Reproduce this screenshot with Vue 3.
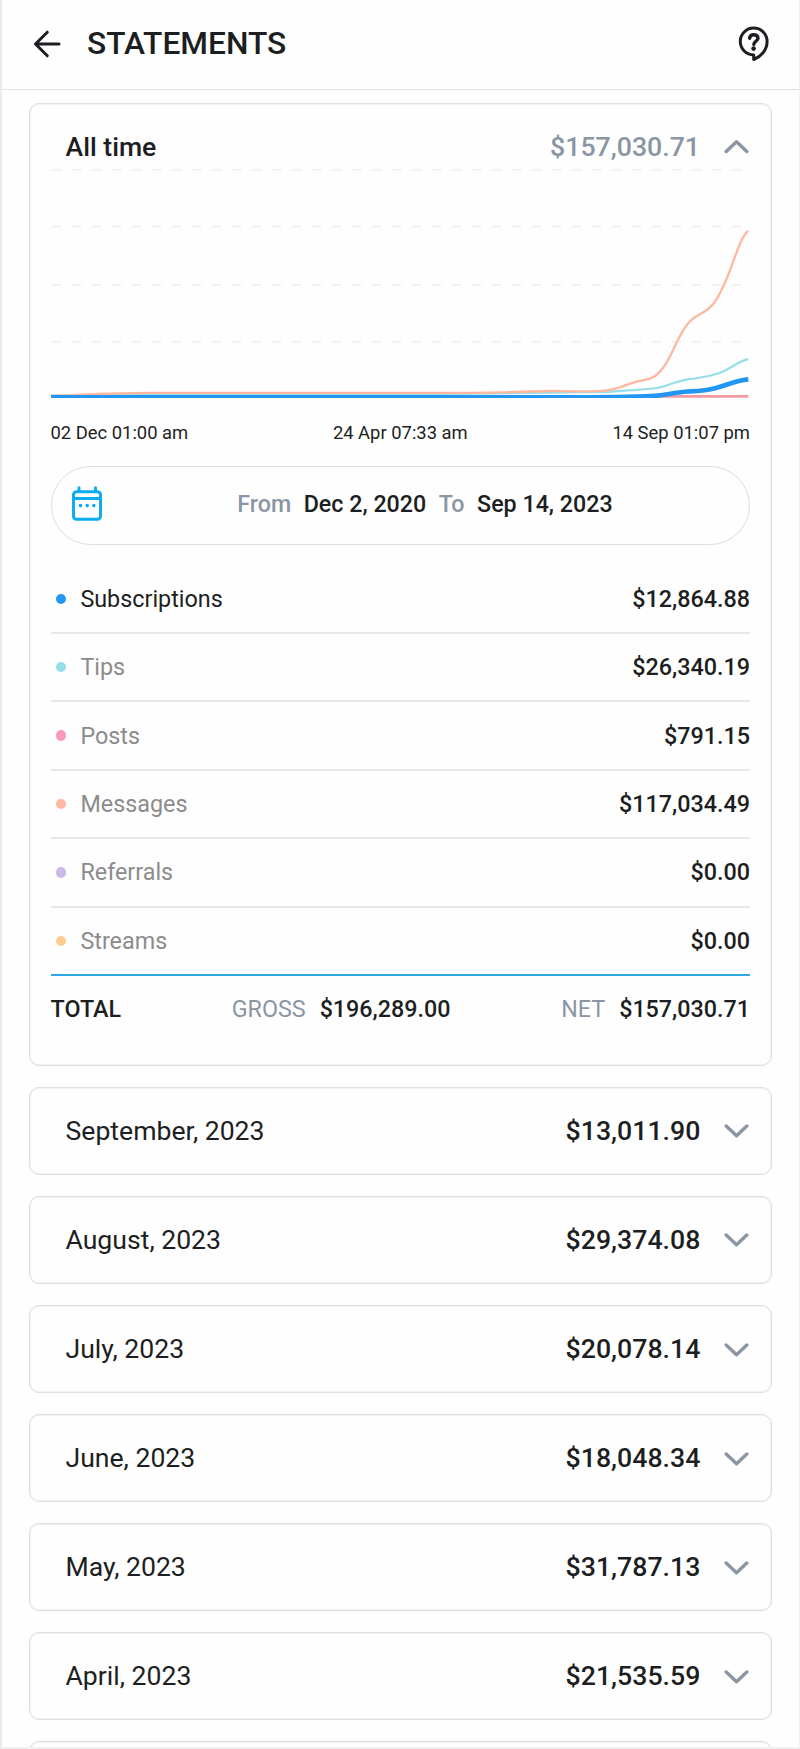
<script setup>
const gridLines = [169.7, 226.5, 285, 341.7, 397.5]

const sources = [
  { name: 'Subscriptions', amount: '$12,864.88', color: '#2196f3', active: true },
  { name: 'Tips', amount: '$26,340.19', color: '#97dfe8' },
  { name: 'Posts', amount: '$791.15', color: '#f99bbd' },
  { name: 'Messages', amount: '$117,034.49', color: '#ffb7a0' },
  { name: 'Referrals', amount: '$0.00', color: '#cbb9e8' },
  { name: 'Streams', amount: '$0.00', color: '#ffcc8f' }
]

const months = [
  { name: 'September, 2023', amount: '$13,011.90' },
  { name: 'August, 2023', amount: '$29,374.08' },
  { name: 'July, 2023', amount: '$20,078.14' },
  { name: 'June, 2023', amount: '$18,048.34' },
  { name: 'May, 2023', amount: '$31,787.13' },
  { name: 'April, 2023', amount: '$21,535.59' }
]
</script>

<template>
  <div class="page">
    <header class="header">
      <svg class="back" width="28" height="28" viewBox="0 0 28 28">
        <path d="M26 14H2.5M14.3 2.2 2.5 14l11.8 11.8" />
      </svg>
      <h1 class="title">STATEMENTS</h1>
      <svg class="help" width="32" height="36" viewBox="0 0 32 36">
        <path class="bubble" d="M15.7 28.9A13.4 13.4 0 1 1 29.1 15.5C29.1 23.5 23.5 30.5 15.7 33.5Z" />
        <path class="mark" d="M11.6 12.2C11.9 9.8 13.6 8.7 15.8 8.7C18.2 8.7 20 10.1 20 12.2C20 15.1 15.9 15.4 15.8 18.4" />
        <circle cx="15.6" cy="22.6" r="2.3" />
      </svg>
    </header>

    <main class="list">
      <section class="card open">
        <div class="summary">
          <span class="label">All time</span>
          <span class="sum muted">$157,030.71</span>
          <svg class="chevron" width="25" height="15" viewBox="0 0 25 15">
            <path d="M2.2 12.6 12.5 2.8 22.8 12.6" />
          </svg>
        </div>

        <svg class="chart" width="699" height="232" viewBox="51 166 699 232">
          <path v-for="y in gridLines" :key="y" class="grid" :d="`M51.3 ${y}H746`" />
          <path class="posts" d="M50.5 396.4H748.3" />
          <path class="tips" d="M50.5 395.5C90 395 110 394.2 150 394L300 394L450 393.8L608 392C625 390 645 390 657 388C668 386 676 381 689 379.2C704 377.3 706 377.5 718 373.5C730 369.5 738 361 748.3 359.2" />
          <path class="messages" d="M50.5 396C90 394.5 110 392.8 150 392.8L300 392.8C400 392.8 470 393.3 500 392.4C525 391.5 540 391 552 391C566 391 580 391.8 597 391.1C618 391 622 385 638 381.4C645 379.8 649 380 655 376C673 363 677 328 696 316.5C703 312 707 312 714 303C731 280 737 239 748.3 231" />
          <path class="subs" d="M50.5 397.3H590C630 397 651 396.5 661 395.3C671 394.2 677 392 688 391.5C700 391 705 391 716 388C730 384 738 380 748.3 379.4" />
        </svg>

        <div class="dates">
          <span>02 Dec 01:00 am</span>
          <span>24 Apr 07:33 am</span>
          <span>14 Sep 01:07 pm</span>
        </div>

        <div class="range">
          <svg class="calendar" width="32" height="36" viewBox="0 0 32 36">
            <rect x="2.5" y="5.7" width="27" height="27.5" rx="3" />
            <path d="M2.5 12.6H29.5M8 1.8V5M24.5 1.8V5" />
            <g class="days">
              <circle cx="9.5" cy="19.6" r="1.8" />
              <circle cx="16.2" cy="19.6" r="1.8" />
              <circle cx="22.8" cy="19.6" r="1.8" />
            </g>
          </svg>
          <div class="period">
            <span class="word">From</span>
            <b>Dec 2, 2020</b>
            <span class="word">To</span>
            <b>Sep 14, 2023</b>
          </div>
        </div>

        <ul class="sources">
          <li v-for="s in sources" :key="s.name" class="source" :class="{ active: s.active }">
            <i class="dot" :style="{ background: s.color }"></i>
            <span class="source-name">{{ s.name }}</span>
            <b>{{ s.amount }}</b>
          </li>
        </ul>

        <div class="total">
          <b>TOTAL</b>
          <div class="pair"><span>GROSS</span><b>$196,289.00</b></div>
          <div class="pair"><span>NET</span><b>$157,030.71</b></div>
        </div>
      </section>

      <section v-for="m in months" :key="m.name" class="card month">
        <span class="label">{{ m.name }}</span>
        <span class="sum">{{ m.amount }}</span>
        <svg class="chevron" width="25" height="15" viewBox="0 0 25 15">
          <path d="M2.2 3 12.5 12.8 22.8 3" />
        </svg>
      </section>
      <section class="card month"></section>
    </main>
  </div>
</template>

<style>
body {
  margin: 0;
  background: #fefefe;
}
</style>

<style scoped>
.page {
  box-sizing: border-box;
  width: 800px;
  height: 1749px;
  overflow: hidden;
  border: solid #e8ebee;
  border-width: 0 1px 2px 2px;
  border-right-color: #f0f1f3;
  border-bottom-color: #eff0f1;
  background: #fefefe;
  color: #1d1e22;
  font-family: Roboto, "Liberation Sans", sans-serif;
}
.page svg {
  flex: none;
  display: block;
  fill: none;
  stroke-linecap: round;
  stroke-linejoin: round;
}
b {
  font-weight: 500;
}
.header {
  box-sizing: border-box;
  display: flex;
  align-items: center;
  height: 90px;
  padding: 0 29px 1px 31px;
  border-bottom: 1px solid #dfe2e6;
}
.back {
  stroke: #1d1e22;
  stroke-width: 3;
}
.title {
  flex: 1;
  margin: 0 0 0 26px;
  font-size: 31.7px;
  font-weight: 500;
  line-height: 40px;
}
.help .bubble {
  stroke: #1d1e22;
  stroke-width: 3;
}
.help .mark {
  stroke: #1d1e22;
  stroke-width: 3.4;
}
.help circle {
  fill: #1d1e22;
}
.list {
  display: flex;
  flex-direction: column;
  gap: 20.7px;
  padding: 13px 27px 0 27px;
}
.card {
  box-sizing: border-box;
  flex: none;
  border: 1px solid #dadfe5;
  border-radius: 10px;
  box-shadow: inset 0 0 0 1px #f0f2f5;
}
.open {
  height: 963px;
  padding: 0 21px 0 20.5px;
}
.summary {
  display: flex;
  align-items: center;
  height: 39px;
  padding: 23px 1px 0 15px;
}
.month {
  display: flex;
  align-items: center;
  height: 88.4px;
  padding: 0 21.7px 0 35.5px;
}
.label {
  flex: 1;
  font-size: 26.6px;
}
.label,
.sum {
  line-height: 32px;
}
.summary .label {
  font-weight: 500;
}
.sum {
  margin-right: 24px;
  font-size: 26.7px;
  font-weight: 500;
}
.muted {
  color: #8a96a3;
}
.chevron {
  stroke: #8a96a3;
  stroke-width: 3.4;
}
.chart {
  overflow: hidden;
}
.grid {
  stroke: #f2f2f3;
  stroke-width: 2;
  stroke-dasharray: 10 10;
}
.chart path {
  stroke-linecap: butt;
}
.posts {
  stroke: #f59aa2;
  stroke-width: 2.6;
}
.tips {
  stroke: #97dfe8;
  stroke-width: 2.2;
}
.messages {
  stroke: #ffb7a0;
  stroke-width: 2.3;
}
.subs {
  stroke: #2196f3;
  stroke-width: 4.6;
}
.dates {
  display: flex;
  justify-content: space-between;
  height: 24px;
  margin-top: 23.4px;
  font-size: 18.4px;
  line-height: 24px;
}
.range {
  box-sizing: border-box;
  display: flex;
  align-items: center;
  height: 79px;
  margin-top: 20.6px;
  padding: 0 20px 2px;
  border: 1px solid #d9dee4;
  border-radius: 40px;
}
.calendar {
  margin-left: -0.5px;
  stroke: #0badee;
  stroke-width: 3;
}
.calendar .days {
  fill: #0badee;
  stroke: none;
}
.period {
  flex: 1;
  display: flex;
  justify-content: center;
  gap: 12.5px;
  padding-left: 18px;
  font-size: 23.25px;
}
.word {
  color: #8a96a3;
  font-weight: 500;
}
.sources {
  margin: 20.6px 0 0;
  padding: 0;
  list-style: none;
}
.source {
  box-sizing: border-box;
  display: flex;
  align-items: center;
  height: 68.4px;
  border-bottom: 2px solid #e4e8ec;
  color: #8c8c8c;
  font-size: 23.35px;
}
.source:last-child {
  border-bottom-color: #2ea9e6;
}
.source b,
.active {
  color: #1d1e22;
}
.source-name {
  flex: 1;
}
.dot {
  width: 10.4px;
  height: 10.4px;
  margin: 0 14.5px 0 5px;
  border-radius: 50%;
}
.total {
  display: flex;
  align-items: center;
  justify-content: space-between;
  height: 66px;
  font-size: 23.3px;
}
.pair {
  display: flex;
  gap: 14px;
}
.pair span {
  color: #8a96a3;
}
</style>
